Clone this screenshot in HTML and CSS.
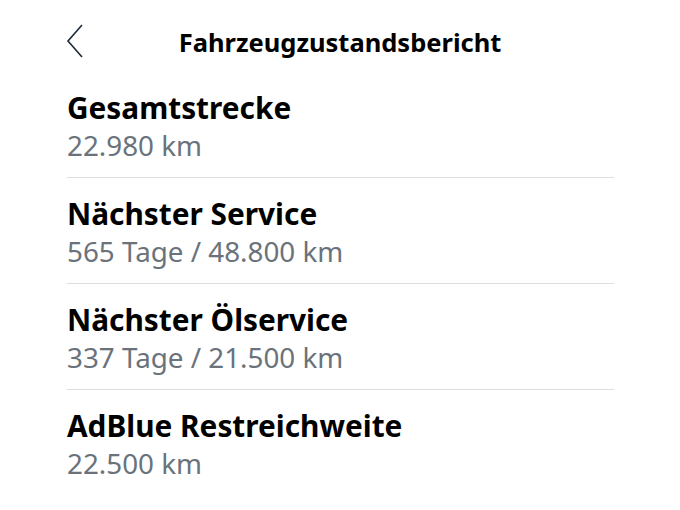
FILE: index.html
```html
<!DOCTYPE html>
<html lang="de">
<head>
    <meta charset="UTF-8">
    <meta name="viewport" content="width=device-width, initial-scale=1.0">
    <title>Fahrzeugzustandsbericht</title>
    <link rel="stylesheet" href="styles.css">
</head>
<body>
    <div class="header">
        <span class="back">
            <svg width="18" height="34" viewBox="0 0 18 34">
                <polyline points="16,1 2,17 16,33" fill="none" stroke="#1b2a3a" stroke-width="1.6"/>
            </svg>
        </span>
        <h1>Fahrzeugzustandsbericht</h1>
    </div>

    <div class="list">
        <div class="item">
            <div class="label">Gesamtstrecke</div>
            <div class="value">22.980 km</div>
        </div>
        <div class="item">
            <div class="label">Nächster Service</div>
            <div class="value">565 Tage / 48.800 km</div>
        </div>
        <div class="item">
            <div class="label">Nächster Ölservice</div>
            <div class="value">337 Tage / 21.500 km</div>
        </div>
        <div class="item">
            <div class="label">AdBlue Restreichweite</div>
            <div class="value">22.500 km</div>
        </div>
    </div>
</body>
</html>
```

FILE: styles.css
```css
body {
    margin: 0;
    padding: 0;
    background: #fff;
    font-family: "Noto Sans", sans-serif;
    color: #000;
}
.header {
    position: relative;
    height: 84px;
    display: flex;
    align-items: center;
    justify-content: center;
}
.back {
    position: absolute;
    left: 66px;
    top: 24px;
}
.header h1 {
    margin: 0;
    font-size: 25.5px;
    font-weight: 700;
}
.list {
    margin: 0 66px 0 67px;
}
.item {
    padding: 5px 0 14px;
    border-bottom: 1px solid #dedede;
    margin-bottom: 12px;
}
.item:last-child {
    border-bottom: none;
}
.label {
    font-size: 29.8px;
    font-weight: 700;
    line-height: 38px;
}
.value {
    font-size: 27.8px;
    line-height: 36px;
    color: #6a737b;
}
```
